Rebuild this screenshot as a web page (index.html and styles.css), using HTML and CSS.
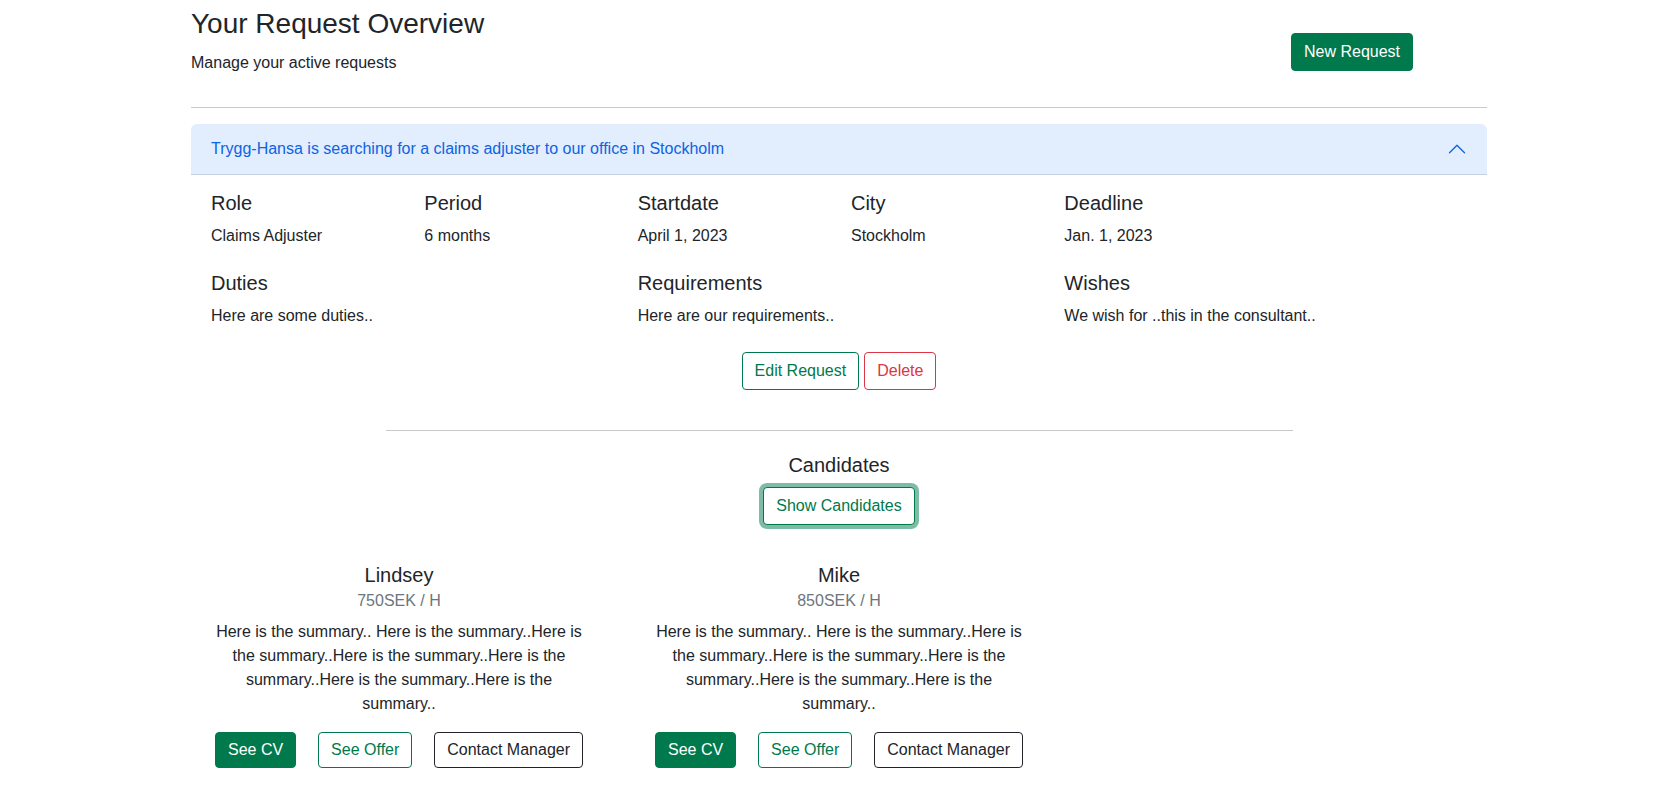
FILE: index.html
```html
<!DOCTYPE html>
<html lang="en">
<head>
<meta charset="utf-8">
<title>Your Request Overview</title>
<link rel="stylesheet" href="styles.css">
</head>
<body>
<div class="container">
  <div class="page-header">
    <div class="header-main">
      <h3 class="page-title">Your Request Overview</h3>
      <p class="page-subtitle">Manage your active requests</p>
    </div>
    <div class="header-side">
      <button class="btn btn-success">New Request</button>
    </div>
  </div>
  <hr class="divider">

  <div class="accordion">
    <div class="accordion-header">
      <span class="accordion-title">Trygg-Hansa is searching for a claims adjuster to our office in Stockholm</span>
      <svg class="chevron" viewBox="0 0 16 16" width="20" height="20" aria-hidden="true"><path fill="#0c63e4" fill-rule="evenodd" d="M1.646 4.646a.5.5 0 0 1 .708 0L8 10.293l5.646-5.647a.5.5 0 0 1 .708.708l-6 6a.5.5 0 0 1-.708 0l-6-6a.5.5 0 0 1 0-.708z"/></svg>
    </div>
    <div class="accordion-body">
      <div class="info-grid">
        <div class="info-cell"><h5 class="info-label">Role</h5><p class="info-value">Claims Adjuster</p></div>
        <div class="info-cell"><h5 class="info-label">Period</h5><p class="info-value">6 months</p></div>
        <div class="info-cell"><h5 class="info-label">Startdate</h5><p class="info-value">April 1, 2023</p></div>
        <div class="info-cell"><h5 class="info-label">City</h5><p class="info-value">Stockholm</p></div>
        <div class="info-cell"><h5 class="info-label">Deadline</h5><p class="info-value">Jan. 1, 2023</p></div>
        <div class="info-cell"></div>
        <div class="info-cell span-2"><h5 class="info-label">Duties</h5><p class="info-value">Here are some duties..</p></div>
        <div class="info-cell span-2"><h5 class="info-label">Requirements</h5><p class="info-value">Here are our requirements..</p></div>
        <div class="info-cell span-2"><h5 class="info-label">Wishes</h5><p class="info-value">We wish for ..this in the consultant..</p></div>
      </div>

      <div class="request-actions">
        <button class="btn btn-outline-success">Edit Request</button>
        <button class="btn btn-outline-danger">Delete</button>
      </div>

      <hr class="divider divider-inner">

      <div class="candidates-head">
        <h5 class="candidates-title">Candidates</h5>
        <button class="btn btn-outline-success btn-focus">Show Candidates</button>
      </div>

      <div class="candidate-list">
        <div class="candidate-card">
          <h5 class="card-title">Lindsey</h5>
          <h6 class="card-subtitle">750SEK / H</h6>
          <p class="card-text">Here is the summary.. Here is the summary..Here is the summary..Here is the summary..Here is the summary..Here is the summary..Here is the summary..</p>
          <div class="card-actions">
            <button class="btn btn-sm-h btn-success">See CV</button>
            <button class="btn btn-sm-h btn-outline-success">See Offer</button>
            <button class="btn btn-sm-h btn-outline-dark">Contact Manager</button>
          </div>
        </div>
        <div class="candidate-card">
          <h5 class="card-title">Mike</h5>
          <h6 class="card-subtitle">850SEK / H</h6>
          <p class="card-text">Here is the summary.. Here is the summary..Here is the summary..Here is the summary..Here is the summary..Here is the summary..Here is the summary..</p>
          <div class="card-actions">
            <button class="btn btn-sm-h btn-success">See CV</button>
            <button class="btn btn-sm-h btn-outline-success">See Offer</button>
            <button class="btn btn-sm-h btn-outline-dark">Contact Manager</button>
          </div>
        </div>
      </div>
    </div>
  </div>
</div>
</body>
</html>
```

FILE: styles.css
```css
* { box-sizing: border-box; }

html, body {
  margin: 0;
  padding: 0;
  background: #fff;
}

body {
  font-family: "Liberation Sans", Arial, Helvetica, sans-serif;
  font-size: 16px;
  line-height: 1.5;
  color: #212529;
}

h3, h5, h6, p { margin: 0; font-weight: 400; }

.container {
  max-width: 1320px;
  margin: 0 auto;
  padding: 7px 12px 0;
}

/* header */
.page-header {
  display: grid;
  grid-template-columns: 1fr 196px;
  column-gap: 24px;
}

.page-title {
  font-size: 28px;
  line-height: 1.2;
  margin-bottom: 10px;
}

.page-subtitle {
  margin-bottom: 16px;
}

.header-side {
  padding-top: 26px;
}

.divider {
  border: 0;
  border-top: 1px solid #c8c9ca;
  margin: 16px 0;
  height: 0;
}

/* buttons */
.btn {
  font-family: inherit;
  font-size: 16px;
  line-height: 24px;
  padding: 6px 12px;
  border: 1px solid transparent;
  border-radius: 4px;
  background: transparent;
  cursor: pointer;
  white-space: nowrap;
}

.btn-sm-h {
  padding-top: 5px;
  padding-bottom: 5px;
}

.btn-success {
  background: #00794c;
  border-color: #00794c;
  color: #fff;
}

.btn-outline-success {
  color: #00794c;
  border-color: #00794c;
  background: #fff;
}

.btn-outline-danger {
  color: #dc3545;
  border-color: #dc3545;
  background: #fff;
}

.btn-outline-dark {
  color: #212529;
  border-color: #212529;
  background: #fff;
}

.btn-focus {
  box-shadow: 0 0 0 4px rgba(0, 121, 76, 0.5);
}

/* accordion */
.accordion {
  border-radius: 6px;
}

.accordion-header {
  display: flex;
  align-items: center;
  justify-content: space-between;
  padding: 13px 20px 13px;
  background: #e2eefe;
  color: #0c63e4;
  border-radius: 6px 6px 0 0;
  box-shadow: inset 0 -1px 0 rgba(0, 0, 0, 0.125);
  height: 51px;
}

.chevron {
  transform: rotate(180deg);
  flex-shrink: 0;
}

.accordion-body {
  padding: 16px 20px;
}

.info-grid {
  display: grid;
  grid-template-columns: repeat(6, 1fr);
  column-gap: 24px;
  row-gap: 8px;
}

.span-2 { grid-column: span 2; }

.info-label {
  font-size: 20px;
  line-height: 1.2;
  margin-bottom: 9px;
}

.info-value {
  margin-bottom: 15px;
}

.request-actions {
  display: flex;
  justify-content: center;
  gap: 5px;
  margin-top: 9px;
}

.divider-inner {
  width: 907px;
  margin: 40px auto 22px;
}

.candidates-head {
  display: flex;
  flex-direction: column;
  align-items: center;
}

.candidates-title {
  font-size: 20px;
  line-height: 1.2;
  margin-bottom: 10px;
}

.candidate-list {
  display: flex;
  gap: 40px;
  margin: 22px 0 0 -12px;
}

.candidate-card {
  width: 400px;
  padding: 16px;
  text-align: center;
}

.card-title {
  font-size: 20px;
  line-height: 1.2;
  margin-bottom: 4px;
}

.card-subtitle {
  font-size: 16px;
  line-height: 1.2;
  color: #6c757d;
  margin-bottom: 10px;
}

.card-text {
  margin: 0 -2px 16px;
}

.card-actions {
  display: flex;
  justify-content: space-between;
}
```
